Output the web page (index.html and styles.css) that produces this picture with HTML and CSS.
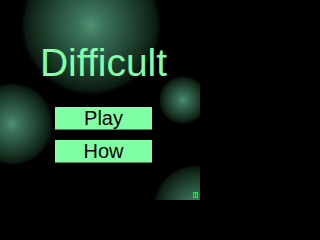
FILE: index.html
```html
<!DOCTYPE html>
<html>
<head>
<meta charset="utf-8">
<link rel="stylesheet" href="styles.css">
</head>
<body>
<div class="stage">
  <div class="orb orb-big"></div>
  <div class="orb orb-left"></div>
  <div class="orb orb-right"></div>
  <div class="orb orb-bottom"></div>
  <main class="menu">
    <h1 class="title">Difficult</h1>
    <div class="buttons">
      <button class="btn">Play</button>
      <button class="btn">How</button>
    </div>
  </main>
  <svg class="badge" width="5" height="6" viewBox="0 0 5 6">
    <rect width="5" height="6" fill="#19e64a"/>
    <rect x="1" y="1" width="1" height="4" fill="#0c8a2a"/>
    <rect x="3" y="2" width="1" height="3" fill="#0c8a2a"/>
  </svg>
</div>
</body>
</html>
```
FILE: styles.css
```css
html, body {
  margin: 0;
  padding: 0;
  background: #000;
}
.stage {
  position: relative;
  width: 200px;
  height: 200px;
  overflow: hidden;
  background: #000;
  font-family: "Liberation Sans", Arial, sans-serif;
}
.orb {
  position: absolute;
  border-radius: 50%;
  background: radial-gradient(circle closest-side, #4f9173 0%, #3b7259 20%, #28503f 50%, #16301f 78%, #0a1a12 94%, rgba(0,0,0,0) 100%);
}
.orb-big { left: 21px; top: -45px; width: 140px; height: 140px; }
.orb-left { left: -29px; top: 83px; width: 82px; height: 82px; }
.orb-right { left: 159px; top: 76px; width: 48px; height: 48px; }
.orb-bottom { left: 153px; top: 165px; width: 86px; height: 86px; }
.menu {
  position: relative;
  display: flex;
  flex-direction: column;
  align-items: center;
  padding-top: 43px;
  padding-left: 7px;
}
.title {
  margin: 0;
  font-weight: normal;
  font-size: 39px;
  line-height: 40px;
  color: #80ffa4;
}
.buttons {
  display: flex;
  flex-direction: column;
  gap: 10px;
  margin-top: 24px;
}
.btn {
  width: 97px;
  height: 23px;
  margin: 0;
  padding: 0;
  border: none;
  border-bottom: 1px solid #3f8c5a;
  background: #80ffa4;
  color: #000;
  font-family: "Liberation Sans", Arial, sans-serif;
  font-size: 20px;
  line-height: 21px;
  box-sizing: border-box;
  text-align: center;
}
.badge {
  position: absolute;
  left: 193px;
  top: 192px;
}
```
